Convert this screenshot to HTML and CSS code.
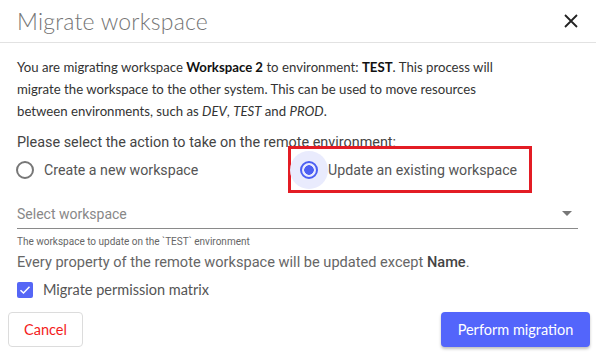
FILE: index.html
```html
<!DOCTYPE html>
<html lang="en">
<head>
  <meta charset="UTF-8">
  <title>Migrate workspace</title>
  <link rel="stylesheet" href="styles.css">
</head>
<body>
  <div class="mw-dialog">
    <div class="mw-header">
      <div class="mw-title">Migrate workspace</div>
      <button class="mw-close" aria-label="Close">
        <svg width="14" height="14" viewBox="0 0 14 14"><path d="M1 1L13 13M13 1L1 13" stroke="#222" stroke-width="1.8"/></svg>
      </button>
    </div>
    <div class="mw-body">
      <p class="mw-intro">You are migrating workspace <b>Workspace 2</b> to environment: <b>TEST</b>. This process will migrate the workspace to the other system. This can be used to move resources between environments, such as <i>DEV</i>, <i>TEST</i> and <i>PROD</i>.</p>
      <div class="mw-question">Please select the action to take on the remote environment:</div>
      <div class="mw-radios">
        <label class="mw-radio">
          <span class="mw-radio-icon"><span class="mw-circle"></span></span>
          <span>Create a new workspace</span>
        </label>
        <label class="mw-radio mw-radio-marked">
          <span class="mw-radio-icon checked"><span class="mw-circle"></span></span>
          <span>Update an existing workspace</span>
        </label>
      </div>
      <div class="mw-select">
        <span>Select workspace</span>
        <svg width="10" height="5" viewBox="0 0 10 5"><path d="M0 0H10L5 5Z" fill="#777"/></svg>
      </div>
      <div class="mw-helper">The workspace to update on the `TEST` environment</div>
      <div class="mw-note">Every property of the remote workspace will be updated except <b>Name</b>.</div>
      <label class="mw-check">
        <span class="mw-box"><svg width="12" height="10" viewBox="0 0 12 10"><path d="M1.5 5.2L4.5 8L10.5 1.8" stroke="#fff" stroke-width="1.5" fill="none"/></svg></span>
        <span>Migrate permission matrix</span>
      </label>
    </div>
    <div class="mw-footer">
      <button class="mw-btn mw-cancel">Cancel</button>
      <button class="mw-btn mw-primary">Perform migration</button>
    </div>
  </div>
</body>
</html>
```

FILE: styles.css
```css
body { margin: 0; background: #fff; font-family: "Lato", "Noto Sans", sans-serif; }
.mw-dialog { width: 596px; height: 357px; box-sizing: border-box; }
.mw-header {
  height: 42px; border-bottom: 1px solid #e2e2e2; display: flex; align-items: center;
  justify-content: space-between; padding: 0 18px 0 17px; box-sizing: content-box;
}
.mw-title { font-size: 23px; font-weight: 300; color: #757575; letter-spacing: 0.2px; }
.mw-close { border: none; background: none; padding: 0; display: flex; cursor: pointer; }
.mw-body { padding: 0 18px 0 17px; }
.mw-intro { margin: 13px 0 10px; max-width: 480px; font-size: 13.2px; line-height: 22px; color: #333; }
.mw-intro b { font-weight: 700; color: #111; }
.mw-question { font-family: Roboto, sans-serif; font-size: 14.4px; line-height: 22px; color: #444; }
.mw-radios { display: flex; align-items: center; margin: -8px 0 0 -11px; }
.mw-radio {
  display: flex; align-items: center; font-family: Roboto, sans-serif; font-size: 14.2px;
  color: #555; width: 282px; height: 47px; box-sizing: border-box;
}
.mw-radio-marked { width: auto; border: 3px solid #e31c24; padding-right: 12px; }
.mw-radio-marked .mw-radio-icon { margin-left: -1px; }
.mw-radio-icon {
  width: 38px; height: 38px; border-radius: 50%; display: flex; align-items: center;
  justify-content: center; flex: none;
}
.mw-circle { width: 14px; height: 14px; border: 2px solid #777; border-radius: 50%; }
.mw-radio-icon.checked { background: #e9ebfd; }
.mw-radio-icon.checked .mw-circle {
  border-color: #4c5ff2; background: radial-gradient(circle, #4c5ff2 0 4.5px, transparent 5px);
}
.mw-select {
  margin-top: 6px; height: 29px; border-bottom: 1px solid #8a8a8a; display: flex;
  align-items: center; justify-content: space-between; padding-right: 6px;
  font-family: Roboto, sans-serif; font-size: 14px; color: #888;
}
.mw-helper { font-family: Roboto, sans-serif; font-size: 10px; color: #666; margin-top: 7px; }
.mw-note { font-family: Roboto, sans-serif; font-size: 14.6px; color: #666; margin-top: 4px; line-height: 22px; }
.mw-note b { color: #444; font-weight: 500; }
.mw-check { display: flex; align-items: center; gap: 10px; margin-top: 8px; font-size: 14.5px; color: #555; }
.mw-box {
  width: 16px; height: 16px; background: #5566f6; border-radius: 2px; display: flex;
  align-items: center; justify-content: center;
}
.mw-footer { display: flex; justify-content: space-between; padding: 14px 6px 0 8px; }
.mw-btn {
  height: 35px; border-radius: 4px; font-family: "Lato", sans-serif; font-size: 14.5px; cursor: pointer;
}
.mw-cancel { width: 75px; background: #fff; color: #f41c1c; border: 1px solid #dcdcdc; }
.mw-primary {
  width: 149px; background: #5365fb; color: #fff; border: none;
  box-shadow: 0 2px 3px rgba(0, 0, 0, 0.25);
}
```
